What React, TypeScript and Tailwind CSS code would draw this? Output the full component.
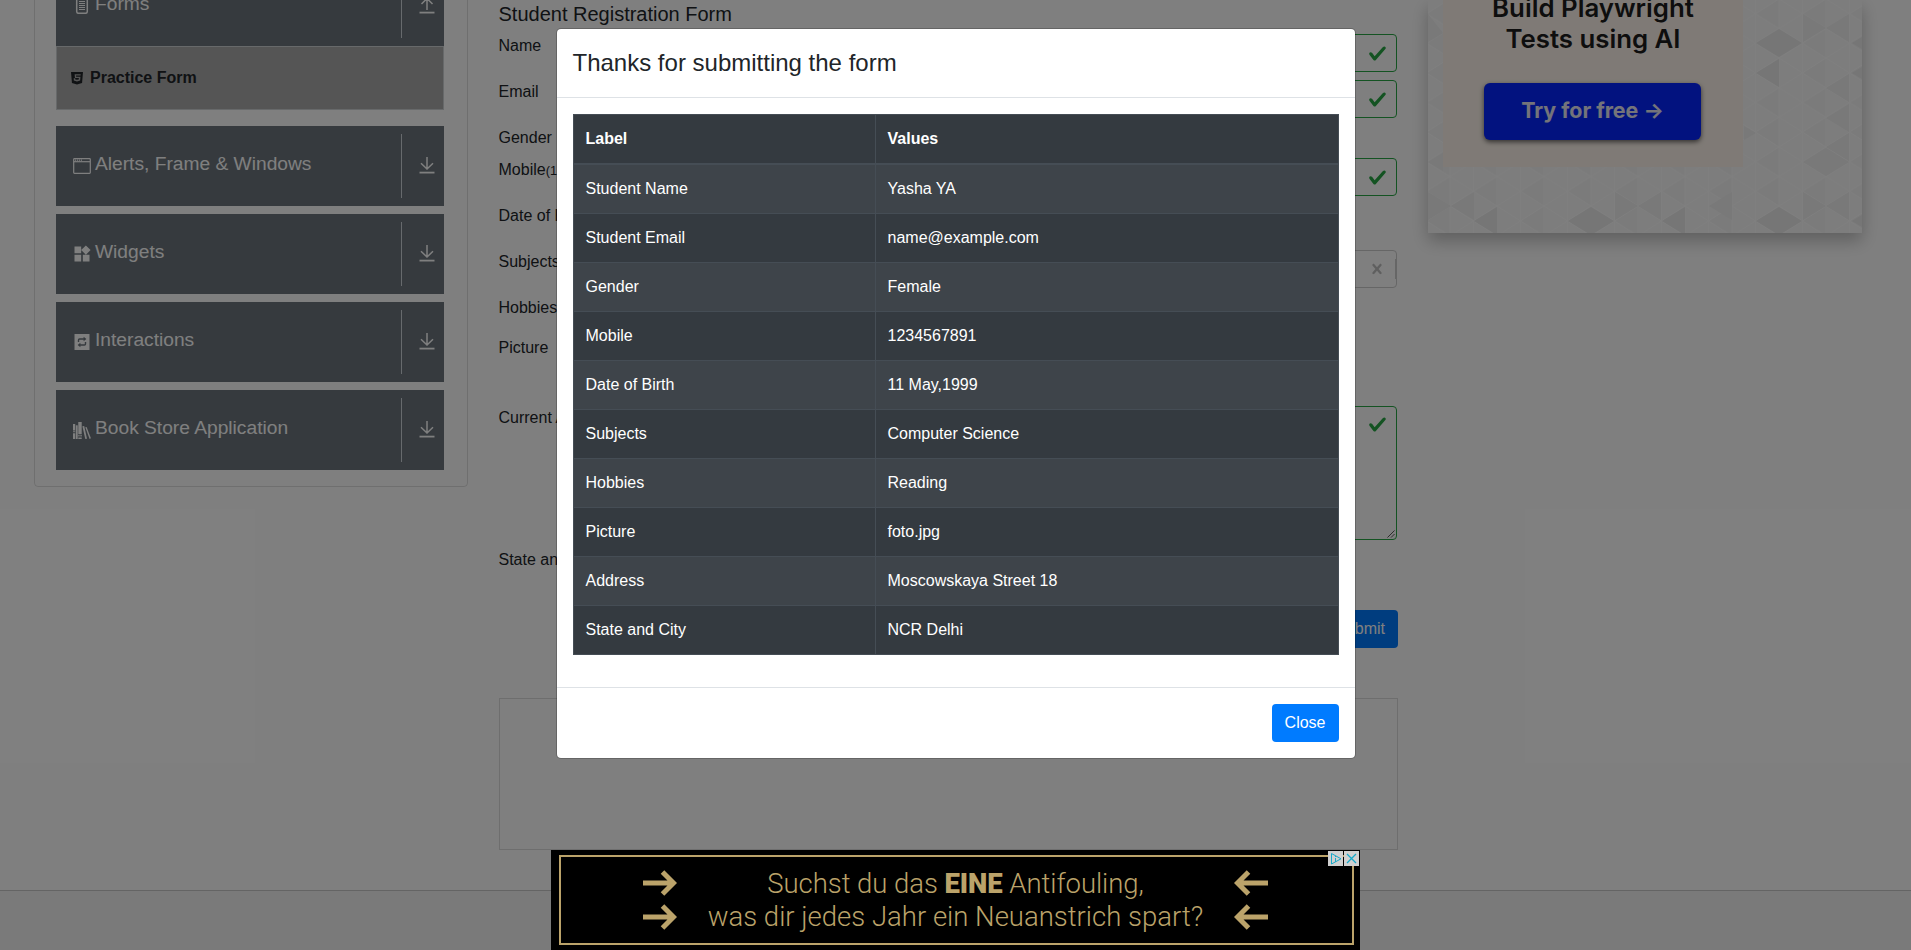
import React from "react";
import { MdWidgets } from "react-icons/md";

const SANS = "font-['Liberation_Sans',sans-serif]";

function FormsIcon() {
  return (
    <svg viewBox="0 0 16 16" className="h-4 w-[18px]" fill="none" stroke="currentColor">
      <rect x="2.7" y="0.7" width="10.6" height="14.6" rx="1.8" strokeWidth="1.5" />
      <path d="M5 3.5h6M5 5.5h6M5 7.5h6M5 9.5h6M5 11.5h6" />
    </svg>
  );
}

function WindowIcon() {
  return (
    <svg viewBox="0 0 18 16" className="h-4 w-[18px]" fill="none" stroke="currentColor">
      <rect x="0.7" y="0.7" width="16.6" height="14.6" rx="0.8" strokeWidth="1.2" />
      <path d="M1 3.7h16" strokeWidth="1.2" />
      <path d="M2 2.2h7" strokeWidth="1.2" strokeDasharray="1.2 0.8" />
    </svg>
  );
}

function InteractionsIcon() {
  return (
    <svg viewBox="0 0 18 16" className="h-4 w-[18px]">
      <path fill="currentColor" d="M1.5 0h15v16h-15z" />
      <path d="M5.5 8V6q0-1 1-1h5M12.5 8v2q0 1-1 1h-5" fill="none" stroke="#6c757d" strokeWidth="1.4" />
      <path d="M10.6 2.7L13.4 5L10.6 7.3zM7.4 8.7L4.6 11L7.4 13.3z" fill="#6c757d" />
    </svg>
  );
}

function BooksIcon() {
  return (
    <svg viewBox="0 0 18 17" className="h-[17px] w-[18px]" fill="currentColor">
      <path d="M0 2h2.2v6.5H0zM0 9.3h2.2v1H0zM0 11.2h2.2V17H0z" />
      <path d="M2.8 3.3h1.9V17H2.8z" />
      <path d="M5.3 0h3.4v12.2H5.3zM5.3 13h1.3v1.6H5.3zM5.3 15.4h3.4V17H5.3zM7.4 13h1.3v1.6H7.4z" />
      <path d="M9.4 4.3l1.8-.4L14 16.7l-1.7.3z" />
      <path d="M12.3 5.3l1.3-.4L17.9 16.3l-1.3.6z" />
    </svg>
  );
}

function ArrowIcon({ up = false }: { up?: boolean }) {
  return (
    <svg viewBox="0 0 16 17" className="h-[17px] w-4" fill="none" stroke="currentColor" strokeWidth="1.5">
      <path d={up ? "M8 13V1.5M2.5 7L8 1.5L13.5 7" : "M8 0V12M2 6.3L8 12L14 6.3"} />
      <path d="M0.5 15.6h15" strokeWidth="1.8" />
    </svg>
  );
}

function Group({ icon, label, up }: { icon: React.ReactNode; label: string; up?: boolean }) {
  return (
    <div className="flex h-20 w-full items-center bg-[#6c757d] text-white">
      <div className="flex h-full flex-1 items-center pl-[17px]">
        <div className="flex w-[22px]">{icon}</div>
        <span className="-mt-1 text-[19.2px] leading-6">{label}</span>
      </div>
      <div className="h-16 w-px bg-[#ced4da]" />
      <div className="flex w-[42px] justify-center pb-px pl-[7px]">
        <ArrowIcon up={up} />
      </div>
    </div>
  );
}

function Sidebar() {
  return (
    <div className="-mt-[34px] ml-[34px] flex h-[521px] w-[434px] flex-col rounded border border-black/[.125] pr-[23px] pl-[21px] text-white">
      <div className="-mt-px">
        <Group icon={<FormsIcon />} label="Forms" up />
      </div>
      <div className="mb-4 flex h-16 items-center border border-[#cfd2d5] bg-[#aaaaaa] pl-3.5 text-base font-bold text-[#212529]">
        <svg viewBox="0 0 448 512" preserveAspectRatio="none" className="mr-[7px] h-[14px] w-3" fill="currentColor">
          <path d="M0 32l35 403 189 61 189-61 35-403zm358 132H188l4 46h162l-13 137-117 34-117-34-6-80h56l3 40 64 17 65-17 5-48H148l-12-142h226z" />
        </svg>
        Practice Form
      </div>
      <div className="flex flex-col gap-2">
        <Group icon={<WindowIcon />} label="Alerts, Frame & Windows" />
        <Group icon={<MdWidgets className="-mt-px -ml-px h-[20px] w-[20px]" />} label="Widgets" />
        <Group icon={<InteractionsIcon />} label="Interactions" />
        <Group icon={<BooksIcon />} label="Book Store Application" />
      </div>
    </div>
  );
}

function Check() {
  return (
    <svg viewBox="0 0 8 8" className="h-[19px] w-[19px]">
      <path fill="#28a745" d="M2.3 6.73L.6 4.53c-.4-1.04.46-1.4 1.1-.8l1.1 1.4 3.4-3.8c.6-.63 1.6-.27 1.2.7l-4 4.6c-.43.5-.8.4-1.1.1z" />
    </svg>
  );
}

function Row({ label, h, children }: { label: React.ReactNode; h: string; children?: React.ReactNode }) {
  return (
    <div className={`flex items-start pr-px ${h}`}>
      <div className="w-[225px] shrink-0 whitespace-nowrap leading-6">{label}</div>
      <div className="flex flex-1 justify-end">{children}</div>
    </div>
  );
}

function ValidInput() {
  return (
    <div className="flex h-[38px] w-full items-center justify-end rounded border border-[#28a745] pr-[9px]">
      <Check />
    </div>
  );
}

function Form() {
  return (
    <div className="ml-[30.5px] flex h-[950px] w-[899.5px] flex-col text-base text-[#212529]">
      <h5 className="mb-2 pt-0.5 text-xl leading-6">Student Registration Form</h5>
      <Row h="h-[46px]" label="Name"><ValidInput /></Row>
      <Row h="h-[46px]" label="Email"><ValidInput /></Row>
      <Row h="h-8" label="Gender" />
      <Row h="h-[46px]" label={<>Mobile<span className="text-[12.8px]">(10 Digits)</span></>}><ValidInput /></Row>
      <Row h="h-[46px]" label="Date of Birth" />
      <Row h="h-[46px]" label="Subjects">
        <div className="flex h-[38px] w-full items-center justify-end rounded border border-[#cccccc]">
          <svg viewBox="0 0 20 20" className="mr-[8px] h-5 w-5" fill="#bfbfbf">
            <path d="M14.35 14.85c-.47.47-1.23.47-1.7 0L10 11.82l-2.65 3.03c-.47.47-1.23.47-1.7 0-.47-.47-.47-1.23 0-1.7L8.4 10 5.65 6.85c-.47-.47-.47-1.23 0-1.7.47-.47 1.23-.47 1.7 0L10 8.18l2.65-3.03c.47-.47 1.23-.47 1.7 0 .47.47.47 1.23 0 1.7L11.6 10l2.76 3.15c.46.47.46 1.23-.01 1.7z" />
          </svg>
          <div className="h-5 w-px bg-[#cccccc]" />
        </div>
      </Row>
      <Row h="h-10" label="Hobbies" />
      <Row h="h-[70px]" label="Picture" />
      <Row h="h-[142px]" label="Current Address">
        <div className="flex h-[134px] w-full flex-col items-end justify-between rounded border border-[#28a745] pt-[8px]">
          <div className="pr-[9px]"><Check /></div>
          <svg viewBox="0 0 9 9" className="mr-px mb-px h-2 w-2" fill="none" stroke="#444" strokeWidth="1">
            <path d="M0.5 8.5l8-8M4.5 8.5l4-4" />
          </svg>
        </div>
      </Row>
      <Row h="h-[62px]" label="State and City" />
      <div className="flex justify-end">
        <div className="flex h-[38px] items-center rounded bg-[#007bff] px-[13px] text-white">Submit</div>
      </div>
      <div className="mt-[50px] h-[152px] border border-[#dddddd]" />
    </div>
  );
}

function SideAd() {
  return (
    <div className="relative ml-[30px] h-[233px] w-[434px] bg-[#fafafa] shadow-[0_8px_16px_rgba(0,0,0,0.25)]">
      <svg className="absolute inset-0 h-full w-full" viewBox="0 0 434 233">
        <defs>
          <pattern id="tri" width="47" height="29.6" patternUnits="userSpaceOnUse" patternTransform="translate(22 28.5)">
            <path d="M23.5 14.8L47 0V29.6z" fill="#f6f6f6" />
            <path d="M0 0V29.6M47 0V29.6M23.5 0V29.6M0 0L47 29.6M47 0L0 29.6" fill="none" stroke="#ffffff" strokeWidth="1" />
          </pattern>
        </defs>
        <rect width="434" height="233" fill="url(#tri)" />
        <path
          d="M328 43l23-14 23 14-23 14zM328 221l23-14 23 14-23 14zM140 221l23-14 23 14-23 14zM328 73l23-14v28zM46 221l23-14v28zM234 221l23-14v28zM424 73l23-14v28zM424 221l23-14v28zM424 43l23-14v28z"
          fill="#ececec"
        />
        <path
          d="M375 162l23-14 23 14-23 14zM375 14v28l23-14zM398 28l23-14v28zM398 88l23-14v28zM398 118l23-14v28zM398 147l23-14v28zM375 192v28l23-14zM398 206l23-14v28zM0 192v28l23-14zM23 206l23-14v28zM187 192v28l23-14zM210 206l23-14v28zM0 14v28l15-9zM0 162l15-9v18zM281 206l23-14v28zM316 126v14l12-7z"
          fill="#f2f2f2"
        />
      </svg>
      <div className="relative ml-[15px] flex h-[167px] w-[300px] flex-col items-center bg-[#fef5ec] font-['Inter',sans-serif] font-semibold text-[#1c1c1c]">
        <div className="-mt-2 text-[25.8px] leading-[31px] whitespace-nowrap">Build Playwright</div>
        <div className="text-[25.8px] leading-[31px] whitespace-nowrap">Tests using AI</div>
        <div className="mt-[29px] mr-[1px] flex h-[57px] w-[217px] items-center justify-center rounded-md bg-[#0525ff] pb-[2px] text-[21.4px] font-bold text-[#e8e8f4] shadow-[0_2px_5px_rgba(0,0,0,0.6)]">Try for free →</div>
      </div>
    </div>
  );
}

const rows = [
  ["Student Name", "Yasha YA"],
  ["Student Email", "name@example.com"],
  ["Gender", "Female"],
  ["Mobile", "1234567891"],
  ["Date of Birth", "11 May,1999"],
  ["Subjects", "Computer Science"],
  ["Hobbies", "Reading"],
  ["Picture", "foto.jpg"],
  ["Address", "Moscowskaya Street 18"],
  ["State and City", "NCR Delhi"],
];

function Modal() {
  return (
    <div className="mt-7 flex h-[731px] w-[800px] flex-col rounded-[5px] border border-black/20 bg-white bg-clip-padding text-[#212529]">
      <div className="flex h-[69px] items-center border-b border-[#dee2e6] pl-4 text-2xl leading-9">Thanks for submitting the form</div>
      <div className="p-4">
        <table className="mb-4 w-full border-collapse border border-[#454d55] bg-[#343a40] text-base leading-6 text-white">
          <thead>
            <tr>
              <th className="w-[302px] border border-b-2 border-[#454d55] p-3 text-left font-bold">Label</th>
              <th className="border border-b-2 border-[#454d55] p-3 text-left font-bold">Values</th>
            </tr>
          </thead>
          <tbody>
            {rows.map(([k, v]) => (
              <tr key={k} className="odd:bg-white/5">
                <td className="border border-[#454d55] p-3">{k}</td>
                <td className="border border-[#454d55] p-3">{v}</td>
              </tr>
            ))}
          </tbody>
        </table>
      </div>
      <div className="flex flex-1 items-center justify-end border-t border-[#dee2e6] pr-4">
        <button className="flex h-[38px] items-center rounded bg-[#007bff] px-[13px] text-base text-white">Close</button>
      </div>
    </div>
  );
}

function GoldArrow({ left = false }: { left?: boolean }) {
  return (
    <svg viewBox="0 0 34 26" className={left ? "h-[26px] w-[34px] -scale-x-100" : "h-[26px] w-[34px]"} fill="none" stroke="#bba36a" strokeWidth="5">
      <path d="M0 13h30M19.5 2L30.5 13L19.5 24" />
    </svg>
  );
}

function BottomAd() {
  return (
    <div className="absolute bottom-0 left-[551px] flex h-[100px] w-[809px] flex-col bg-black pt-[5px] pl-2 text-[#bba36a]">
      <div className="flex h-[90px] w-[795px] items-center justify-between border-2 border-[#bba36a] pr-[84px] pl-[82px]">
        <div className="flex flex-col gap-2"><GoldArrow /><GoldArrow /></div>
        <div className="flex flex-col items-center pt-px font-['Roboto',sans-serif] text-[27.5px] leading-[32.5px] font-light whitespace-nowrap">
          <div className="tracking-[-0.05px]">Suchst du das <b className="font-black">EINE</b> Antifouling,</div>
          <div>was dir jedes Jahr ein Neuanstrich spart?</div>
        </div>
        <div className="flex flex-col gap-2"><GoldArrow left /><GoldArrow left /></div>
      </div>
      <div className="absolute top-px right-px flex gap-px">
        <svg viewBox="0 0 15 15" className="h-[15px] w-[15px] bg-[#d0d0d0]" fill="none" stroke="#16a9c9">
          <path d="M3.5 2.5v10.5l9.5-5.2zM7.5 5v1M7.5 7v4" />
        </svg>
        <svg viewBox="0 0 15 15" className="h-[15px] w-[15px] bg-[#d0d0d0]" fill="none" stroke="#16a9c9" strokeWidth="1.3">
          <path d="M3 3l9 9M12 3l-9 9" />
        </svg>
      </div>
    </div>
  );
}

export default function App() {
  return (
    <div className={`relative h-[950px] w-[1911px] overflow-hidden bg-white ${SANS}`}>
      <div className="flex h-[890px] items-start overflow-hidden">
        <Sidebar />
        <Form />
        <SideAd />
      </div>
      <div className="h-[60px] border-t border-[#c8c8c8] bg-[#f5f5f5]" />
      <div className="absolute inset-0 flex items-start justify-center bg-black/50">
        <Modal />
      </div>
      <BottomAd />
    </div>
  );
}
